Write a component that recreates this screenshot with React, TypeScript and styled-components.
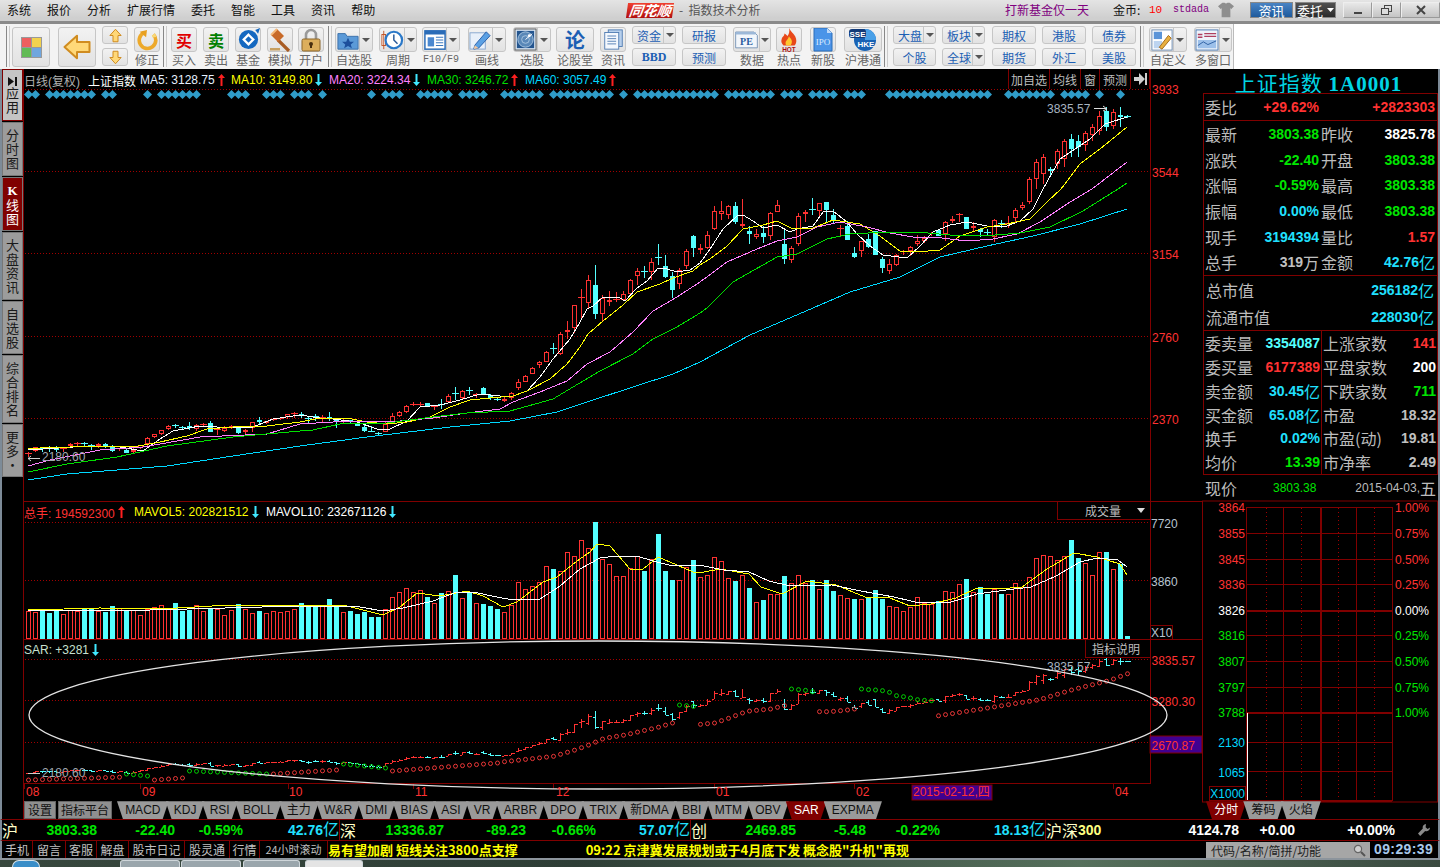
import React from "react";
import styled, { createGlobalStyle } from "styled-components";

const SANS = `"Liberation Sans", "Noto Sans CJK SC", sans-serif`;
const CJK = `"Noto Sans CJK SC", "Liberation Sans", sans-serif`;
const SERIF = `"Liberation Serif", "Noto Sans CJK SC", serif`;
const MONO = `"Liberation Mono", monospace`;
const RED = "#ff3232";
const CYAN = "#54ffff";
const DARK = "#800000";
const GREEN = "#00e600";

const Global = createGlobalStyle`
  html, body { margin: 0; padding: 0; background: #000; }
  * { box-sizing: border-box; }
`;

const Page = styled.div`
  width: 1440px; height: 867px; overflow: hidden; background: #000;
  font-family: ${SANS}; display: flex; flex-direction: column;
`;

/* ---------- title bar ---------- */
const TitleBar = styled.div`
  height: 24px; display: flex; align-items: flex-start; padding-top: 2px;
  background: linear-gradient(#e4e4e4, #cfcfcf 85%);
  border-bottom: 3px solid #8a8a8a;
  font-size: 12px; color: #111; line-height: 16px; white-space: nowrap;
`;
const Menu = styled.div`
  width: 627px; display: flex; gap: 16px; padding-left: 7px; font-family: ${CJK};
`;
const Logo = styled.div`
  width: 46px; height: 15px; margin-top: 1px; background: linear-gradient(#f04030, #b01010); color: #fff;
  font: italic bold 14px/15px ${CJK}; text-align: center; transform: skewX(-8deg);
`;
const SubTitle = styled.div`
  margin-left: 6px; color: #555; font-family: ${CJK};
`;
const TitleRight = styled.div`
  margin-left: auto; width: 435px; display: flex; align-items: flex-start;
`;
const TitleItem = styled.div<{ $w: number; $ml?: number; $c?: string; $f?: string; $s?: number }>`
  width: ${p => p.$w}px; margin-left: ${p => p.$ml ?? 0}px; color: ${p => p.$c || "#111"};
  font-family: ${p => p.$f || CJK}; font-size: ${p => p.$s ?? 12}px; white-space: nowrap;
`;
const NavBtn = styled.div<{ $bg: string; $w: number; $ml: number }>`
  margin-left: ${p => p.$ml}px; width: ${p => p.$w}px; height: 16px; display: flex; align-items: center; justify-content: center; gap: 4px; color: #fff;
  font: 13px/15px ${CJK}; background: ${p => p.$bg}; border: 1px solid #888;
`;
const WinBtn = styled.div<{ $w: number; $ml?: number }>`
  margin-left: ${p => p.$ml ?? 0}px; width: ${p => p.$w}px; height: 16px; display: flex; align-items: center; justify-content: center;
  background: linear-gradient(#e8e8e8, #c4c4c4); border: 1px solid #9a9a9a; border-top-color: #eee; border-left-color: #eee;
`;

/* ---------- toolbar ---------- */
const Toolbar = styled.div`
  height: 46px; display: flex; align-items: flex-start; background: #f3f3f3; padding-top: 3px;
`;
const ToolEnd = styled.div`
  flex: 1; align-self: stretch; margin: -3px 0 0 1px; background: #fff; border-left: 1px solid #bbb;
`;
const Sep = styled.div<{ $ml: number }>`
  margin-left: ${p => p.$ml}px; width: 4px; height: 41px; margin-top: -1px;
  border-left: 1px solid #888; border-right: 1px solid #ccc;
`;
const boxStyle = `
  background: linear-gradient(#f2f2f2, #e2e2e2);
  border: 1px solid #c6c6c6; border-radius: 3px;
`;
const BigBtn = styled.div<{ $ml: number }>`
  ${boxStyle}
  margin-left: ${p => p.$ml}px; width: 38px; height: 40px; display: flex; align-items: center; justify-content: center;
`;
const Stack = styled.div<{ $ml: number; $w: number }>`
  margin-left: ${p => p.$ml}px; width: ${p => p.$w}px; display: flex; flex-direction: column; gap: 4px; margin-top: -1px;
`;
const ArrowBtn = styled.div`
  ${boxStyle}
  height: 18px; display: flex; align-items: center; justify-content: center;
`;
const TextBtn = styled.div<{ $bold?: boolean }>`
  ${boxStyle}
  height: 18px; display: flex; align-items: center; justify-content: center; position: relative;
  color: #1c5fb4; white-space: nowrap;
  font: ${p => (p.$bold ? `bold 12px ${SERIF}` : `12px ${CJK}`)};
`;
const TextSplit = styled(TextBtn)`
  justify-content: flex-start; padding-left: 4px;
`;
const MiniDrop = styled.div`
  position: absolute; right: 0; top: 0; bottom: 0; width: 12px; border-left: 1px solid #c6c6c6;
  display: flex; align-items: center; justify-content: center;
`;
const Caret = styled.div`
  width: 0; height: 0; border-left: 4px solid transparent; border-right: 4px solid transparent; border-top: 4px solid #555;
`;
const ToolCol = styled.div<{ $ml: number; $w: number }>`
  margin-left: ${p => p.$ml}px; width: ${p => p.$w}px; display: flex; flex-direction: column; align-items: center;
`;
const IconBox = styled.div`
  ${boxStyle}
  width: 100%; height: 25px; display: flex; align-items: center; justify-content: center;
`;
const IconMain = styled.div`
  flex: 1; display: flex; align-items: center; justify-content: center; height: 100%;
`;
const IconDrop = styled.div`
  width: 13px; height: 100%; border-left: 1px solid #c6c6c6; display: flex; align-items: center; justify-content: center;
`;
const ToolLabel = styled.div<{ $mono?: boolean }>`
  height: 16px; color: #666; white-space: nowrap;
  font: ${p => (p.$mono ? `10px/16px ${MONO}` : `12px/16px ${CJK}`)};
`;
const BigChar = styled.div<{ $c: string; $s: number }>`
  color: ${p => p.$c}; font: bold ${p => p.$s}px/1 ${CJK};
`;

/* ---------- main area ---------- */
const Body = styled.div`
  height: 750px; display: flex; border-left: 2px solid #7d8b98; border-right: 2px solid #7d8b98;
`;
const LeftTabs = styled.div`
  width: 22px; border-right: 1px solid ${DARK}; display: flex; flex-direction: column; gap: 1px;
`;
const SideTab = styled.div<{ $h: number; $kind?: "active" | "light" }>`
  height: ${p => p.$h}px; width: 21px; display: flex; flex-direction: column; align-items: center; justify-content: center;
  text-align: center; font: 13px/14px ${CJK}; word-break: break-all;
  padding: 0 3px;
  background: ${p => (p.$kind === "active" ? DARK : p.$kind === "light" ? "#c4c4c4" : "#9c9c9c")};
  color: ${p => (p.$kind === "active" ? "#fff" : "#1a1a1a")};
  border: 1px solid ${p => (p.$kind === "light" ? DARK : "#777")};
`;
const SideK = styled.b`
  font: bold 13px/14px ${SERIF};
`;
const ChartCol = styled.div`
  width: 1178px; display: flex; flex-direction: column;
`;
const Panel = styled.div<{ $h: number }>`
  position: relative; height: ${p => p.$h}px; overflow: visible;
`;
const ChartSvg = styled.svg`
  display: block; overflow: visible; position: absolute; left: 0; top: 0;
  text { font: 12px ${SANS}; }
`;
const HeaderRow = styled.div<{ $top?: number }>`
  position: absolute; left: 0; top: ${p => p.$top ?? 0}px; height: 20px; display: flex; align-items: center; white-space: nowrap;
  font-size: 12px;
`;
const HeadText = styled.span<{ $c: string; $w?: number }>`
  color: ${p => p.$c}; display: inline-flex; align-items: center; gap: 3px;
  ${p => (p.$w ? `width: ${p.$w}px;` : "")}
`;
const TopActions = styled.div`
  position: absolute; right: 52px; top: 0; height: 20px; display: flex; border-left: 1px solid ${DARK};
`;
const TopAction = styled.div<{ $w: number }>`
  width: ${p => p.$w}px; border-right: 1px solid ${DARK}; color: #bdbdbd; font: 12px/19px ${CJK};
  text-align: center; display: flex; align-items: center; justify-content: center;
`;
const IndicatorBox = styled.div<{ $w: number; $pr: number; $gap?: number }>`
  position: absolute; right: 52px; top: 0; width: ${p => p.$w}px; height: 18px; border: 1px solid ${DARK}; border-top: none; border-right: none;
  color: #bdbdbd; font: 12px/17px ${CJK}; background: #000;
  display: flex; align-items: center; justify-content: flex-end; gap: ${p => p.$gap ?? 0}px; padding-right: ${p => p.$pr}px;
`;
const TabBar = styled.div`
  height: 18px; display: flex; align-items: flex-start; white-space: nowrap;
`;
const PlainTab = styled.div<{ $w: number; $ml: number }>`
  margin-left: ${p => p.$ml}px; width: ${p => p.$w}px; height: 18px; background: #8f8f8f; border: 1px solid #666;
  color: #111; font: 12px/16px ${CJK}; text-align: center;
`;
const Trap = styled.div<{ $active?: boolean }>`
  height: 18px; margin-left: -3px; padding: 0 8.14px;
  clip-path: polygon(0 0, 100% 0, calc(100% - 6px) 100%, 6px 100%);
  background: ${p => (p.$active ? DARK : "#9a9a9a")};
  color: ${p => (p.$active ? "#fff" : "#111")};
  font: 12px/18px ${SANS};
`;
const TabStart = styled.div`
  width: 8px;
`;

/* ---------- right panel ---------- */
const RightPanel = styled.div`
  width: 236px; display: flex; flex-direction: column;
`;
const RightTitle = styled.div`
  height: 24px; text-align: center; color: #00d4e4; font: 21px/26px ${CJK}; white-space: nowrap;
  letter-spacing: 1px; padding-right: 3px;
`;
const TitleCode = styled.b`
  font: bold 21px/26px ${SERIF};
`;
const Box = styled.div`
  margin-left: 1px; width: 235px; border: 1px solid ${DARK}; border-bottom: none;
`;
const Section = styled.div<{ $h: number }>`
  height: ${p => p.$h}px; display: flex; flex-direction: column;
  border-bottom: 1px solid ${DARK};
`;
const Row = styled.div`
  flex: 1; display: flex; align-items: center;
`;
const Half = styled.div<{ $w: number; $pad?: number; $line?: boolean }>`
  width: ${p => p.$w}px; height: 100%; display: flex; align-items: center; justify-content: space-between;
  padding: 0 ${p => p.$pad ?? 1}px;
  ${p => (p.$line ? `border-left: 1px solid ${DARK};` : "")}
`;
const Label = styled.span`
  color: #bcbcbc; font: 16px/1 ${CJK}; white-space: nowrap;
`;
const Val = styled.span<{ $c: string }>`
  color: ${p => p.$c}; font: bold 14px/1 ${SANS}; white-space: nowrap; display: inline-flex; align-items: center;
`;
const Unit = styled.span<{ $s?: number }>`
  font: ${p => p.$s ?? 16}px/1 ${CJK};
`;
const PriceRow = styled.div`
  height: 26px; display: flex; align-items: center; padding: 0 2px; margin-left: 1px; white-space: nowrap;
`;
const PriceVal = styled.span`
  color: ${GREEN}; font-size: 12px; margin-left: 36px;
`;
const PriceDate = styled.span`
  color: #bcbcbc; font-size: 12px; margin-left: auto; display: inline-flex; align-items: center;
`;
const RightTabs = styled.div`
  height: 18px; display: flex; padding-left: 7px;
`;

/* ---------- status ---------- */
const StatusRow = styled.div`
  height: 21px; display: flex; align-items: center; border-top: 1px solid ${DARK}; border-left: 2px solid #7d8b98; border-right: 2px solid #7d8b98;
  white-space: nowrap;
`;
const Name = styled.span<{ $w: number; $c?: string }>`
  width: ${p => p.$w}px; color: ${p => p.$c || "#ffffc8"}; font: 16px/1 ${CJK}; flex: none; display: inline-flex; align-items: center;
`;
const Num = styled.b`
  font: bold 14px/1 ${SANS}; color: #ffff80;
`;
const Cell = styled.span<{ $w: number; $c: string; $line?: boolean }>`
  width: ${p => p.$w}px; flex: none; text-align: right; color: ${p => p.$c}; font: bold 14px/20px ${SANS};
  ${p => (p.$line ? `border-right: 1px solid ${DARK};` : "")}
`;
const WrenchWrap = styled.span`
  margin-left: 22px; display: inline-flex;
`;
const LinkRow = styled.div`
  height: 18px; display: flex; align-items: stretch; border-top: 1px solid ${DARK};
  border-left: 2px solid #7d8b98; border-right: 2px solid #7d8b98; white-space: nowrap;
`;
const LinkItem = styled.div<{ $w: number; $small?: boolean }>`
  width: ${p => p.$w}px; flex: none; border-right: 1px solid ${DARK}; color: #c0c0c0; text-align: center;
  font: ${p => (p.$small ? 11 : 12)}px/17px ${CJK};
`;
const Ticker = styled.div`
  flex: none; width: 878px; overflow: hidden; color: #ffff00; font: bold 13px/17px ${CJK}; display: flex;
`;
const TickerB = styled.span`
  margin-left: 68px;
`;
const SearchBox = styled.div`
  width: 164px; flex: none; background: #a6a6a6; color: #222; font: 12px/17px ${CJK}; padding-left: 5px;
  display: flex; align-items: center; justify-content: space-between; padding-right: 4px; margin-top: 1px;
`;
const Clock = styled.div`
  margin-left: 4px; color: #a8c8ea; font: bold 14px/17px ${SANS}; letter-spacing: 0.4px;
`;
const Frame = styled.div`
  height: 2px; background: #8c949c;
`;
const Taskbar = styled.div`
  height: 7px; display: flex; background: linear-gradient(90deg, #38483e, #2e3e36 40%, #56705c 75%, #3a4a40);
  overflow: hidden;
`;
const TaskTab = styled.div<{ $w: number; $ml: number; $bright?: boolean }>`
  margin-left: ${p => p.$ml}px; width: ${p => p.$w}px; height: 7px; border-radius: 3px 3px 0 0;
  background: ${p => (p.$bright ? "#e4e4e4" : "#9aa6ac")}; border: 1px solid #cfd6da; border-bottom: none;
`;
const TaskOrb = styled.div`
  margin-left: 12px; width: 28px; height: 7px; border-radius: 14px 14px 0 0; background: #3a8ec8; border: 1px solid #d8e4ec; border-bottom: none;
`;
const MiniWrap = styled.div`
  position: relative; flex: 1;
`;

/* ---------- icons ---------- */
const Arr: React.FC<{ up?: boolean; c: string }> = ({ up, c }) => (
  <svg width="7" height="12" viewBox="0 0 7 12">
    {up ? <path d="M3.5 0 L7 4 H4.5 V12 H2.5 V4 H0 Z" fill={c} /> : <path d="M3.5 12 L7 8 H4.5 V0 H2.5 V8 H0 Z" fill={c} />}
  </svg>
);
const Squares = () => (
  <svg width="21" height="21" viewBox="0 0 21 21">
    <rect x="0.5" y="0.5" width="10" height="10" fill="#ee5f5f" stroke="#999" />
    <rect x="10.5" y="0.5" width="10" height="10" fill="#f2d24e" stroke="#999" />
    <rect x="0.5" y="10.5" width="10" height="10" fill="#62bb56" stroke="#999" />
    <rect x="10.5" y="10.5" width="10" height="10" fill="#6fa6de" stroke="#999" />
  </svg>
);
const ArrowIcon: React.FC<{ dir: "left" | "up" | "down"; s: number }> = ({ dir, s }) => {
  const rot = dir === "left" ? 0 : dir === "up" ? 90 : -90;
  return (
    <svg width={s} height={s} viewBox="0 0 24 24">
      <path transform={`rotate(${rot} 12 12)`} d="M2 12 L12 3 V8 H22 V16 H12 V21 Z" fill="#ffd878" stroke="#d08c20" strokeWidth="1.6" strokeLinejoin="round" />
    </svg>
  );
};
const Refresh = () => (
  <svg width="22" height="22" viewBox="0 0 24 24">
    <path d="M9 4 A9 9 0 1 0 19 6" fill="none" stroke="#eda92a" strokeWidth="4" />
    <path d="M19 6 A9 9 0 0 1 20 9" fill="none" stroke="#f8d878" strokeWidth="4" />
    <path d="M4 3 L12 1 L11 9 Z" fill="#e8a020" />
  </svg>
);
const Fund = () => (
  <svg width="23" height="23" viewBox="0 0 24 24">
    <circle cx="12" cy="12" r="10" fill="#1468c0" />
    <path d="M19 2 L24 0 L22 6 Z" fill="#1468c0" />
    <path d="M12 7 L17 12 L12 17 L7 12 Z" fill="none" stroke="#fff" strokeWidth="2.4" />
  </svg>
);
const Gavel = () => (
  <svg width="24" height="24" viewBox="0 0 24 24">
    <path d="M10 12 L21 23" stroke="#a85c24" strokeWidth="3.2" />
    <path d="M3 7 L9 1 L16 8 L10 14 Z" fill="#c86a28" />
    <path d="M3 7 L9 1" stroke="#f4b878" strokeWidth="2" />
    <rect x="2" y="20" width="10" height="2.5" fill="#c8a060" />
  </svg>
);
const Lock = () => (
  <svg width="24" height="24" viewBox="0 0 24 24">
    <path d="M7 11 V7 A5 5 0 0 1 17 7 V11" fill="none" stroke="#9a9a9a" strokeWidth="2.6" />
    <rect x="3" y="11" width="18" height="12" rx="1.5" fill="#dcae5c" stroke="#8a6428" />
    <circle cx="12" cy="16" r="2" fill="#4a3010" />
    <rect x="11" y="16" width="2" height="4" fill="#4a3010" />
  </svg>
);
const Folder = () => (
  <svg width="22" height="22" viewBox="0 0 24 24">
    <path d="M1 5 H9 L11 8 H23 V22 H1 Z" fill="#5b9ad8" stroke="#3a6ea8" />
    <path d="M12 9.5 L14 14 H18.5 L15 17 L16.2 21 L12 18.6 L7.8 21 L9 17 L5.5 14 H10 Z" fill="#1c4f9c" />
  </svg>
);
const ClockIcon = () => (
  <svg width="24" height="22" viewBox="0 0 24 24">
    <rect x="1" y="6" width="4" height="12" fill="#fff" stroke="#c05020" />
    <path d="M3 2 V22" stroke="#c05020" />
    <circle cx="14" cy="12" r="9" fill="#fff" stroke="#2a78c8" strokeWidth="2.4" />
    <path d="M14 6 V12 L18 16" stroke="#2a5a98" strokeWidth="1.6" fill="none" />
  </svg>
);
const DocBlue = () => (
  <svg width="22" height="22" viewBox="0 0 24 24">
    <rect x="1" y="2" width="22" height="20" fill="#fff" stroke="#2a6cb8" strokeWidth="1.6" />
    <rect x="1" y="2" width="22" height="4" fill="#2a6cb8" />
    <path d="M4 9 H11 V19 H4 Z" fill="#4a88d0" />
    <path d="M13 9 H21 M13 12 H21 M13 15 H21 M13 18 H21" stroke="#2a6cb8" />
  </svg>
);
const PencilIcon = () => (
  <svg width="23" height="23" viewBox="0 0 24 24">
    <rect x="1" y="5" width="16" height="17" fill="#e8f0fa" stroke="#88a8d0" />
    <path d="M6 18 L18 4 L22 8 L10 21 L5 22 Z" fill="#5aa0e4" stroke="#2a60a8" />
    <path d="M5 22 L6 18 L10 21 Z" fill="#f4c8a0" />
  </svg>
);
const Radar = () => (
  <svg width="23" height="23" viewBox="0 0 24 24">
    <rect x="1" y="1" width="22" height="22" fill="#d8e4f0" stroke="#555" />
    <rect x="3" y="3" width="18" height="18" fill="#23558f" />
    <circle cx="12" cy="12" r="8" fill="#5a88b8" stroke="#a8c4e0" />
    <circle cx="12" cy="12" r="4" fill="none" stroke="#a8c4e0" />
    <path d="M12 12 L19 6" stroke="#fff" />
    <circle cx="16" cy="8" r="1.5" fill="#fff" />
  </svg>
);
const Pages = () => (
  <svg width="21" height="23" viewBox="0 0 24 24">
    <rect x="6" y="1" width="16" height="19" fill="#b8d0ec" stroke="#4a78b0" />
    <rect x="2" y="4" width="16" height="19" fill="#f4f8fd" stroke="#4a78b0" />
    <path d="M5 8 H15 M5 11 H15 M5 14 H15 M5 17 H15" stroke="#4a78b0" />
  </svg>
);
const PeDoc = () => (
  <svg width="25" height="23" viewBox="0 0 30 24">
    <path d="M2 3 H24 L28 7 V22 H2 Z" fill="#f2f6fb" stroke="#6a8ab0" />
    <rect x="2" y="3" width="24" height="3" fill="#9cb8d8" />
    <text x="15" y="18" textAnchor="middle" fontFamily={SERIF} fontWeight="bold" fontSize="12" fill="#2a5ca0">PE</text>
  </svg>
);
const Flame = () => (
  <svg width="22" height="24" viewBox="0 0 24 26">
    <path d="M12 0 C14 5 20 7 20 14 C20 16 19 18 18 19 H6 C4 17 3 15 4 12 C5 9 7 9 7 6 C9 7 10 8 10 9 C12 7 13 4 12 0 Z" fill="#e84818" />
    <path d="M12 9 C13 11 16 13 15 16 C15 17 14 18 14 19 H9 C8 17 8 15 9 14 C10 13 11 12 12 9 Z" fill="#ffc830" />
    <text x="12" y="26" textAnchor="middle" fontFamily={SANS} fontWeight="bold" fontSize="7" fill="#b01010">HOT</text>
  </svg>
);
const IpoDoc = () => (
  <svg width="20" height="24" viewBox="0 0 20 24">
    <path d="M1 0 H14 L19 5 V23 H1 Z" fill="#4a94e8" stroke="#2a6cb8" />
    <path d="M14 0 V5 H19 Z" fill="#bcd8f8" />
    <text x="10" y="17" textAnchor="middle" fontFamily={SERIF} fontSize="9" fill="#dcecff">IPO</text>
  </svg>
);
const SseHke = () => (
  <svg width="32" height="25" viewBox="0 0 32 25">
    <circle cx="18" cy="13" r="11" fill="#1862b4" />
    <path d="M18 2 A11 11 0 0 1 29 13 H18 Z" fill="#48a0e8" />
    <rect x="2" y="2" width="17" height="9" rx="3" fill="#123a78" />
    <text x="10.5" y="9.6" textAnchor="middle" fontFamily={SANS} fontWeight="bold" fontSize="8" fill="#fff">SSE</text>
    <text x="19" y="20" textAnchor="middle" fontFamily={SANS} fontWeight="bold" fontSize="8" fill="#fff">HKE</text>
  </svg>
);
const CustomIcon = () => (
  <svg width="22" height="22" viewBox="0 0 24 24">
    <rect x="1" y="1" width="22" height="22" fill="#fff" stroke="#6a8ab0" />
    <rect x="3" y="3" width="9" height="8" fill="#5a94d8" />
    <rect x="3" y="13" width="9" height="8" fill="#bcd4f0" />
    <path d="M9 20 L19 7 L22 10 L12 22 Z" fill="#e8b040" stroke="#a06818" />
  </svg>
);
const WindowsIcon = () => (
  <svg width="24" height="22" viewBox="0 0 26 24">
    <rect x="1" y="1" width="24" height="22" fill="#eef3fa" stroke="#4a78b0" />
    <path d="M3 6 H8 M3 9 H8 M10 5 H23 M10 8 H23" stroke="#b04060" strokeWidth="1.4" />
    <rect x="3" y="12" width="20" height="9" fill="#9cc0ea" />
    <path d="M3 18 L9 14 L14 17 L23 13" stroke="#2a5ca0" fill="none" />
  </svg>
);
const Shirt = () => (
  <svg width="20" height="16" viewBox="0 0 24 22">
    <path d="M7 1 L10 1 Q12 3 14 1 L17 1 L23 6 L19 10 L18 8 V21 H6 V8 L5 10 L1 6 Z" fill="#8e8e8e" />
  </svg>
);
const MagIcon = () => (
  <svg width="13" height="13" viewBox="0 0 13 13">
    <circle cx="5" cy="5" r="3.6" fill="#cfcfcf" stroke="#666" strokeWidth="1.2" />
    <path d="M8 8 L12 12" stroke="#555" strokeWidth="2" />
  </svg>
);
const WrenchIcon = () => (
  <svg width="14" height="14" viewBox="0 0 14 14">
    <path d="M9 1 A3.5 3.5 0 0 0 5.8 5.6 L1 10.6 L3.2 13 L8.2 8 A3.5 3.5 0 0 0 13 4.6 L10.6 6 L8.6 4.2 Z" fill="#8a8a8a" />
  </svg>
);
const PlayBar = () => (
  <svg width="11" height="9" viewBox="0 0 11 9">
    <path d="M1 0 L7 4.5 L1 9 Z" fill="#111" />
    <rect x="8" y="0" width="2" height="9" fill="#111" />
  </svg>
);

/* ---------- chart data ---------- */
type C = [number, number, number, number, number];
const LC: C[] = ([
  [1150, 1152, 1156, 1165, 0], [1134, 1135, 1146, 1150, 0], [1134, 1137, 1138, 1150, 1], [1132, 1136, 1138, 1150, 1],
  [1132, 1138, 1142, 1148, 1], [1134, 1136, 1140, 1150, 0], [1122, 1125, 1130, 1132, 0], [1120, 1122, 1124, 1134, 0],
  [1118, 1122, 1124, 1130, 1], [1124, 1127, 1130, 1142, 1], [1122, 1125, 1130, 1136, 0], [1122, 1126, 1130, 1136, 1],
  [1128, 1132, 1146, 1150, 1], [1136, 1138, 1140, 1145, 0], [1138, 1142, 1152, 1152, 1], [1130, 1142, 1150, 1156, 0],
  [1128, 1129, 1136, 1140, 0], [1105, 1108, 1126, 1130, 0], [1094, 1095, 1105, 1108, 0], [1082, 1084, 1094, 1098, 0],
  [1068, 1070, 1080, 1084, 0], [1064, 1068, 1070, 1076, 1], [1070, 1075, 1078, 1084, 1], [1060, 1072, 1078, 1084, 1],
  [1064, 1067, 1080, 1086, 0], [1062, 1064, 1068, 1074, 0], [1056, 1062, 1088, 1088, 1], [1078, 1080, 1082, 1098, 0],
  [1072, 1078, 1085, 1090, 0], [1068, 1070, 1076, 1080, 0], [1072, 1073, 1092, 1095, 1], [1080, 1082, 1090, 1098, 0],
  [1060, 1060, 1076, 1088, 0], [1045, 1052, 1058, 1064, 1], [1055, 1056, 1062, 1064, 0], [1050, 1050, 1053, 1056, 0],
  [1046, 1048, 1050, 1054, 0], [1034, 1036, 1045, 1050, 0], [1030, 1032, 1036, 1048, 0],
] as C[]).map(c => [70 + c[0] / 3, 70 + c[1] / 3, 70 + c[2] / 3, 70 + c[3] / 3, c[4]] as C);
const AC: C[] = ([
  [520, 525, 532, 538, 1], [530, 538, 541, 556, 1], [525, 530, 534, 546, 1], [528, 533, 537, 548, 0], [520, 535, 540, 545, 1],
  [540, 543, 550, 568, 1], [540, 545, 549, 552, 0], [542, 544, 550, 553, 1], [552, 553, 560, 562, 1], [557, 563, 576, 580, 1],
  [560, 576, 578, 580, 1], [580, 583, 584, 590, 1], [550, 555, 578, 578, 0], [522, 532, 548, 552, 0], [516, 520, 530, 534, 0],
  [498, 502, 518, 522, 0], [490, 494, 497, 502, 0], [490, 495, 497, 502, 0], [492, 493, 501, 503, 1], [498, 500, 502, 514, 0],
  [480, 496, 498, 510, 1], [466, 470, 488, 490, 0], [445, 462, 465, 482, 1], [454, 455, 478, 480, 0], [444, 452, 457, 468, 1],
  [462, 466, 467, 476, 0], [444, 448, 464, 468, 1], [464, 468, 478, 484, 1], [476, 480, 482, 486, 1], [475, 480, 486, 490, 0],
  [460, 461, 478, 482, 0], [420, 430, 446, 452, 0], [408, 410, 428, 430, 0], [385, 386, 404, 405, 0], [366, 370, 379, 386, 0],
  [335, 338, 368, 370, 0], [313, 328, 331, 345, 1], [278, 286, 344, 348, 0], [246, 274, 280, 300, 0], [198, 199, 268, 282, 0],
  [150, 175, 178, 238, 0], [108, 124, 192, 208, 0], [78, 138, 224, 240, 1], [168, 176, 224, 250, 0], [157, 184, 188, 202, 0],
  [160, 180, 182, 190, 0], [156, 166, 182, 186, 0], [120, 122, 164, 170, 0], [86, 97, 112, 138, 0], [82, 96, 98, 118, 1],
  [58, 68, 100, 122, 0], [15, 53, 56, 78, 1], [48, 82, 114, 118, 1], [100, 112, 152, 176, 1], [86, 92, 136, 150, 0],
  [30, 36, 82, 90, 0], [-12, -8, 28, 54, 1],
] as C[]).map(c => [240 + c[0] / 3, 240 + c[1] / 3, 240 + c[2] / 3, 240 + c[3] / 3, c[4]] as C);
const BC: C[] = ([
  [165, 178, 182, 195, 0], [125, 138, 178, 180, 0], [52, 65, 120, 122, 0], [36, 65, 76, 92, 0], [48, 50, 78, 90, 0],
  [40, 52, 98, 105, 1], [30, 105, 110, 118, 0], [112, 125, 136, 165, 1], [120, 135, 145, 150, 0], [112, 132, 145, 162, 1],
  [68, 72, 142, 152, 0], [33, 48, 68, 70, 0], [122, 165, 210, 225, 1], [170, 178, 214, 222, 0], [72, 82, 164, 170, 0],
  [62, 70, 76, 100, 0], [27, 60, 63, 78, 1], [42, 42, 66, 80, 0], [40, 40, 64, 100, 1], [60, 78, 94, 105, 1],
  [108, 118, 121, 140, 0], [95, 110, 152, 153, 1], [175, 192, 204, 208, 1], [155, 157, 186, 205, 0], [135, 150, 174, 178, 1],
  [125, 125, 198, 198, 1], [205, 210, 236, 252, 1], [210, 226, 245, 255, 0], [195, 197, 228, 232, 0], [182, 186, 188, 198, 0],
  [172, 175, 186, 200, 0], [138, 155, 166, 170, 0], [142, 148, 155, 162, 0], [128, 132, 136, 142, 0], [124, 124, 140, 142, 1],
  [96, 98, 136, 155, 0], [82, 90, 95, 102, 0], [72, 74, 75, 98, 0], [84, 85, 120, 120, 1], [100, 110, 118, 128, 0],
  [118, 120, 128, 144, 1], [120, 130, 132, 140, 1], [90, 94, 144, 160, 0], [92, 102, 105, 118, 1], [82, 103, 105, 118, 0],
  [58, 62, 86, 98, 0], [38, 48, 56, 62, 0], [-36, -30, 38, 46, 0],
] as C[]).map(c => [190 + c[0] / 3, 190 + c[1] / 3, 190 + c[2] / 3, 190 + c[3] / 3, c[4]] as C);
const EC: C[] = [
  [160, 163, 180, 190, 0], [155, 158, 175, 185, 0], [168, 170, 172, 178, 1], [150, 152, 165, 170, 0], [140, 142, 160, 168, 0],
  [135, 140, 150, 158, 1], [136, 142, 148, 158, 1], [132, 134, 146, 152, 0], [125, 128, 136, 142, 0], [112, 117, 132, 136, 0],
  [108, 112, 128, 132, 1], [110, 113, 127, 130, 0], [108, 116, 118, 128, 1], [116, 117, 118, 119, 1],
];
const CANDLES: C[] = [...LC, ...AC, ...BC, ...EC];
const bx = (i: number) => 28 + 7 * i;

const MA: { c: string; pts: number[][] }[] = [
  {
    c: "#ffffff", pts: [[28, 451], [73, 448], [100, 447], [120, 448], [143, 452], [160, 440], [173, 432], [200, 427], [233, 429], [253, 428], [273, 420], [300, 416], [320, 419], [333, 420], [357, 423], [377, 430], [390, 430], [407, 422], [420, 408], [440, 406], [460, 401], [480, 395], [500, 397], [513, 397], [527, 392], [540, 378], [553, 360], [570, 340], [580, 323], [587, 310], [593, 307], [603, 298], [620, 299], [625, 302], [637, 289], [647, 282], [658, 269], [667, 270], [677, 273], [690, 271], [700, 264], [710, 250], [723, 230], [737, 217], [743, 216], [753, 222], [763, 229], [777, 226], [790, 233], [797, 230], [813, 227], [823, 213], [833, 212], [847, 223], [857, 235], [870, 247], [883, 256], [907, 259], [920, 247], [933, 233], [950, 226], [967, 223], [987, 227], [1007, 227], [1020, 222], [1033, 210], [1043, 190], [1060, 160], [1075, 150], [1090, 140], [1105, 125], [1127, 118]],
  },
  {
    c: "#ffff00", pts: [[28, 450], [40, 449], [100, 447], [133, 448], [160, 443], [187, 437], [207, 430], [233, 428], [267, 427], [300, 423], [320, 419], [347, 419], [367, 423], [387, 425], [407, 423], [430, 418], [450, 408], [470, 401], [490, 399], [513, 397], [527, 392], [550, 380], [567, 365], [580, 348], [588, 335], [603, 322], [623, 306], [637, 293], [660, 285], [673, 279], [693, 272], [700, 266], [710, 260], [727, 247], [743, 230], [763, 226], [777, 222], [793, 230], [813, 229], [833, 221], [860, 225], [880, 237], [900, 252], [917, 253], [940, 251], [960, 237], [987, 228], [1007, 225], [1030, 220], [1047, 203], [1061, 190], [1080, 165], [1100, 150], [1127, 128]],
  },
  {
    c: "#ff80ff", pts: [[28, 467], [50, 461], [100, 451], [143, 448], [200, 438], [267, 435], [300, 425], [333, 423], [400, 422], [433, 419], [467, 414], [500, 410], [513, 403], [540, 393], [567, 382], [587, 365], [610, 353], [633, 333], [653, 312], [677, 298], [700, 283], [727, 263], [757, 250], [777, 242], [797, 238], [817, 228], [840, 223], [867, 228], [890, 234], [913, 238], [933, 238], [967, 242], [993, 240], [1017, 235], [1040, 223], [1067, 205], [1092, 190], [1127, 163]],
  },
  {
    c: "#00e000", pts: [[28, 473], [67, 465], [117, 458], [167, 447], [233, 438], [300, 432], [313, 431], [340, 425], [387, 424], [433, 418], [467, 414], [510, 412], [553, 400], [573, 388], [600, 372], [633, 355], [653, 340], [677, 328], [700, 314], [707, 309], [733, 283], [777, 258], [797, 255], [827, 240], [850, 235], [887, 233], [917, 233], [950, 236], [983, 237], [1020, 234], [1050, 228], [1083, 212], [1118, 190], [1127, 184]],
  },
  {
    c: "#00d8ff", pts: [[28, 481], [67, 475], [167, 467], [233, 457], [300, 447], [367, 438], [400, 434], [450, 428], [510, 422], [557, 413], [587, 403], [633, 388], [673, 375], [700, 363], [750, 336], [813, 309], [850, 293], [900, 278], [940, 258], [987, 247], [1033, 237], [1080, 225], [1127, 210]],
  },
];

const VOL_LEFT = [612, 613, 610, 614, 612, 615, 611, 612, 609, 610, 612, 613, 607, 609, 612, 611, 616, 610, 608, 606, 610, 604, 612, 611, 606, 612, 609, 610, 616, 611, 605, 610, 614, 612, 614, 612, 613, 612, 610];
const VOL_A: [number, number][] = [[1092, 1], [1102, 1], [1104, 1], [1102, 0], [1080, 1], [1100, 1], [1120, 0], [1116, 1], [1125, 1], [1118, 1], [1134, 1], [1134, 1], [1110, 0], [1075, 0], [1060, 0], [1048, 0], [1060, 0], [1054, 0], [1075, 1], [1092, 0], [1062, 1], [1056, 0], [1008, 1], [1078, 0], [1060, 1], [1092, 0], [1095, 1], [1100, 1], [1110, 1]];
const VOL_B = [340, 318, 250, 270, 262, 250, 202, 210, 216, 160, 172, 124, 148, 69, 180, 196, 230, 232, 208, 170, 216, 180, 105, 216, 243, 244, 204, 183, 234, 228, 175, 186, 238, 246, 228, 267, 310, 303, 286, 285, 231, 252, 228, 252, 244, 270, 243, 276, 288, 297, 300, 300, 297, 273, 300, 322, 325, 337, 324, 294, 312, 316, 306, 276, 280, 255, 240, 279, 264, 284, 270, 285, 285, 253, 264, 235, 178, 169, 172, 183, 172, 123, 177, 192, 229, 160, 159, 211, 195, 411];
const VOL_BC = "0000000100 0001000000 1011100100 0001010100 1000101100 1011100000 0010001011 0100000000 0110001011".replace(/ /g, "");
const VOLS: { y: number; c: number }[] = [
  ...VOL_LEFT.map((y, i) => ({ y, c: LC[i][4] })),
  ...VOL_A.map(([v, c]) => ({ y: 240 + v / 3, c })),
  ...VOL_B.map((v, i) => ({ y: 500 + v / 3, c: +VOL_BC[i] })),
];
const VOL5 = [[28, 611], [100, 609], [160, 610], [230, 606], [300, 606], [347, 607], [367, 612], [383, 616], [400, 608], [417, 594], [440, 597], [467, 592], [483, 597], [503, 608], [517, 603], [543, 583], [557, 578], [577, 562], [590, 553], [597, 545], [610, 547], [630, 570], [643, 570], [658, 558], [677, 566], [693, 573], [699, 574], [720, 570], [749, 575], [761, 588], [782, 595], [807, 582], [836, 586], [865, 598], [890, 599], [910, 607], [931, 605], [956, 599], [977, 589], [998, 590], [1022, 588], [1047, 570], [1074, 554], [1097, 558], [1120, 565], [1127, 576]];
const VOL10 = [[28, 612], [150, 611], [300, 607], [333, 607], [360, 608], [383, 612], [403, 609], [433, 602], [457, 593], [473, 593], [497, 598], [513, 601], [540, 600], [560, 587], [580, 570], [600, 559], [617, 557], [637, 557], [653, 562], [673, 567], [699, 566], [724, 571], [749, 573], [769, 582], [790, 587], [832, 586], [861, 592], [894, 598], [915, 603], [948, 604], [977, 595], [1006, 591], [1031, 588], [1056, 577], [1080, 563], [1097, 559], [1118, 561], [1127, 568]];

const interp = (pts: number[][], x: number) => {
  for (let k = 1; k < pts.length; k++) {
    if (x <= pts[k][0]) {
      const [a, b] = pts[k - 1], [c, d] = pts[k];
      return b + ((d - b) * (x - a)) / (c - a);
    }
  }
  return pts[pts.length - 1][1];
};
type Dot = { i: number; y: number; c: string };
const runDots = (from: number, to: number, pts: number[][], c: string): Dot[] => {
  const out: Dot[] = [];
  for (let i = from; i <= to; i++) out.push({ i, y: interp(pts, bx(i)), c });
  return out;
};
const listDots = (from: number, ys: number[], c: string): Dot[] => ys.map((v, k) => ({ i: from + k, y: 650 + v / 3, c }));
const ZX = (X: number) => 500 + X / 2.412;
const Z = (a: number[][]) => a.map(([X, Y]) => [ZX(X), 650 + Y / 3]);
const SAR_RED = "#ff3c3c";
const SAR_GREEN = "#00e000";
const DOTS: Dot[] = [
  ...runDots(0, 13, [[28, 781], [125, 778]], SAR_RED),
  ...runDots(14, 17, [[126, 775], [147, 777]], SAR_GREEN),
  ...runDots(18, 22, [[154, 781], [182, 779]], SAR_RED),
  ...runDots(23, 34, [[189, 772], [266, 775]], SAR_GREEN),
  ...runDots(35, 44, [[273, 775], [336, 771]], SAR_RED),
  ...runDots(45, 51, [[343, 765], [385, 769]], SAR_GREEN),
  ...runDots(52, 67, [[392, 772], [497, 764]], SAR_RED),
  ...runDots(68, 92, Z([[10, 338], [128, 322], [180, 303], [213, 288], [250, 268], [300, 258], [380, 235], [415, 222]]), SAR_RED),
  ...listDots(93, [168, 170, 172], SAR_GREEN),
  ...listDots(96, [226, 224, 222, 215, 208, 200, 192, 186, 184, 182, 180, 175, 170], SAR_RED),
  ...listDots(109, [120, 122, 124, 128], SAR_GREEN),
  ...listDots(113, [188, 188, 187, 185, 183, 180], SAR_RED),
  ...listDots(119, [120, 122, 123, 125, 130, 140, 143, 147, 152, 154, 155], SAR_GREEN),
  ...runDots(130, 157, Z([[1058, 200], [1180, 176], [1300, 152], [1380, 122], [1470, 94], [1513, 74]]), SAR_RED),
];
const sarY = (y: number) => 660 + (y - 110.5) * 0.332;

const DIAMONDS = (() => {
  const groups = [[0, 1], [3, 9], [11, 12], [17, 17], [19, 24], [29, 31], [34, 36], [38, 40], [42, 42], [49, 49], [51, 53], [56, 60], [62, 64], [65, 65], [68, 73], [75, 83], [85, 85], [87, 98], [100, 106], [108, 110], [112, 115], [117, 119], [123, 137], [140, 146], [148, 151], [153, 153], [156, 156]];
  const out: number[] = [];
  groups.forEach(([a, b]) => { for (let i = a; i <= b; i++) out.push(i); });
  return out;
})();

const pl = (pts: number[][]) => pts.map(p => `${p[0]},${p[1]}`).join(" ");
const Dotted: React.FC<{ y: number; x1?: number; x2?: number }> = ({ y, x1 = 25, x2 = 1150 }) => (
  <line x1={x1} x2={x2} y1={y + 0.5} y2={y + 0.5} stroke="#a00000" strokeDasharray="1 2" shapeRendering="crispEdges" />
);
const Line: React.FC<{ x1: number; y1: number; x2: number; y2: number; c?: string; w?: number }> = ({ x1, y1, x2, y2, c = DARK, w = 1 }) => (
  <line x1={x1} y1={y1} x2={x2} y2={y2} stroke={c} strokeWidth={w} shapeRendering="crispEdges" />
);

const MainChart = () => (
  <ChartSvg width="1178" height="433" viewBox="24 70 1178 433">
    {[90, 172, 254, 337, 419].map(y => <Dotted key={y} y={y} />)}
    <Line x1={1150.5} y1={70} x2={1150.5} y2={503} />
    <Line x1={24} y1={502.5} x2={1202} y2={502.5} />
    {DIAMONDS.map(i => <path key={i} d={`M${bx(i) + 0.5} 91 l4.5 4.5 l-4.5 4.5 l-4.5 -4.5 Z`} fill="#2f9cc8" />)}
    <g shapeRendering="crispEdges">
      {CANDLES.map((c, i) => {
        const x = bx(i);
        const col = c[4] ? CYAN : RED;
        const t = Math.round(c[1]), b = Math.round(c[2]);
        return (
          <g key={i}>
            <line x1={x + 0.5} x2={x + 0.5} y1={Math.round(c[0])} y2={Math.round(c[3])} stroke={col} />
            {b - t < 2
              ? <line x1={x - 3} x2={x + 4} y1={t + 0.5} y2={t + 0.5} stroke={col} />
              : c[4]
                ? <rect x={x - 2} y={t} width={5} height={b - t} fill={col} />
                : <rect x={x - 1.5} y={t + 0.5} width={4} height={b - t - 1} fill="#000" stroke={col} />}
          </g>
        );
      })}
      {MA.map(m => <polyline key={m.c} points={pl(m.pts)} fill="none" stroke={m.c} />)}
    </g>
    <text x="1047" y="114" fill="#a8b4c0">3835.57</text>
    <path d="M1094 109.5 H1106 M1103 107 L1107 110 L1103 112" stroke="#ddd" fill="none" />
    <path d="M28 459.5 H40 M31 457 L28 459.5 L31 462" stroke="#ccc" fill="none" />
    <text x="42" y="462" fill="#a0a8b0">2180.60</text>
    {[[3933, 95], [3544, 178], [3154, 260], [2760, 343], [2370, 425]].map(([v, y]) => (
      <text key={v} x="1152" y={y} fill={RED}>{v}</text>
    ))}
  </ChartSvg>
);

const VolChart = () => (
  <ChartSvg width="1178" height="138" viewBox="24 503 1178 138">
    <Dotted y={523} /><Dotted y={581} />
    <Line x1={1150.5} y1={503} x2={1150.5} y2={641} />
    <Line x1={24} y1={640.5} x2={1202} y2={640.5} />
    <g shapeRendering="crispEdges">
      {VOLS.map((v, i) => {
        const x = bx(i), y = Math.round(v.y);
        return v.c
          ? <rect key={i} x={x - 2} y={y} width={5} height={640 - y} fill={CYAN} />
          : <rect key={i} x={x - 1.5} y={y + 0.5} width={4} height={639 - y} fill="#000" stroke={RED} />;
      })}
      <polyline points={pl(VOL5)} fill="none" stroke="#ffff00" />
      <polyline points={pl(VOL10)} fill="none" stroke="#ffffff" />
    </g>
    <text x="1151" y="529" fill="#b8c4d0">7720</text>
    <text x="1151" y="587" fill="#b8c4d0">3860</text>
    <rect x="1150.5" y="626.5" width="22" height="14" fill="none" stroke={DARK} />
    <text x="1151" y="638" fill="#b8c4d0">X10</text>
  </ChartSvg>
);

const SarChart = () => (
  <ChartSvg width="1178" height="161" viewBox="24 641 1178 161">
    {[660, 701, 743].map(y => <Dotted key={y} y={y} />)}
    <Line x1={1150.5} y1={641} x2={1150.5} y2={785} />
    <Line x1={24} y1={784.5} x2={1150} y2={784.5} />
    {[24, 140, 288, 413, 553, 714, 854, 1113].map(x => <Line key={x} x1={x + 0.5} y1={785} x2={x + 0.5} y2={790} />)}
    <g shapeRendering="crispEdges">
      {CANDLES.map((c, i) => {
        const x = bx(i), col = c[4] ? CYAN : RED;
        const hi = Math.round(sarY(c[0])), lo = Math.round(sarY(c[3]));
        const op = Math.round(sarY(c[4] ? c[1] : c[2])), cl = Math.round(sarY(c[4] ? c[2] : c[1]));
        return (
          <g key={i} stroke={col}>
            <line x1={x + 0.5} x2={x + 0.5} y1={hi} y2={Math.max(lo, hi + 1)} />
            <line x1={x - 2} x2={x} y1={op + 0.5} y2={op + 0.5} />
            <line x1={x + 1} x2={x + 4} y1={cl + 0.5} y2={cl + 0.5} />
          </g>
        );
      })}
    </g>
    {DOTS.map(d => <circle key={d.i} cx={bx(d.i) + 0.5} cy={d.y} r={2} fill="none" stroke={d.c} strokeWidth={0.9} />)}
    <text x="1047" y="672" fill="#a8b4c0">3835.57</text>
    <path d="M28 774.5 H40" stroke="#ccc" fill="none" />
    <text x="42" y="778" fill="#a0a8b0">2180.60</text>
    <rect x="1150" y="737" width="52" height="17" fill="#400090" stroke={DARK} />
    <text x="1151.5" y="666" fill={RED}>3835.57</text>
    <text x="1151.5" y="707" fill={RED}>3280.30</text>
    <text x="1151.5" y="751" fill={RED}>2670.87</text>
    <ellipse cx="598" cy="716" rx="569" ry="74" fill="none" stroke="#e4e4e4" strokeWidth="1.3" />
    {[["08", 26], ["09", 142], ["10", 289], ["11", 415], ["12", 556], ["01", 716], ["02", 856], ["04", 1115]].map(([t, x]) => (
      <text key={t} x={x} y="797" fill={RED}>{t}</text>
    ))}
    <rect x="912" y="786" width="80" height="15" fill="#400090" stroke={DARK} />
    <text x="913" y="797" fill={RED}>2015-02-12,四</text>
  </ChartSvg>
);

const MINI_ROWS = [
  [507, "3864", "1.00%", RED], [533, "3855", "0.75%", RED], [559, "3845", "0.50%", RED], [584, "3836", "0.25%", RED],
  [610, "3826", "0.00%", "#fff"], [635, "3816", "0.25%", GREEN], [661, "3807", "0.50%", GREEN], [687, "3797", "0.75%", GREEN],
  [712, "3788", "1.00%", GREEN],
] as [number, string, string, string][];

const MiniChart = () => (
  <MiniWrap>
    <ChartSvg width="236" height="301" viewBox="1202 501 236 301">
      <rect x="1202.5" y="501" width="235" height="301" fill="none" stroke={DARK} />
      <rect x="1246.5" y="507.5" width="146" height="293" fill="none" stroke={DARK} />
      {[533, 559, 584, 635, 661, 687, 742, 771].map(y => <Line key={y} x1={1247} x2={1392} y1={y + 0.5} y2={y + 0.5} />)}
      {[610, 712, 800].map(y => <Line key={y} x1={1247} x2={1392} y1={y + 0.5} y2={y + 0.5} w={2} />)}
      {[1283, 1356].map(x => <Line key={x} x1={x + 0.5} x2={x + 0.5} y1={507} y2={800} />)}
      <Line x1={1320.5} x2={1320.5} y1={507} y2={800} w={2} />
      {[1266, 1301, 1338, 1374].map(x => (
        <line key={x} x1={x + 0.5} x2={x + 0.5} y1={508} y2={800} stroke="#a00000" strokeDasharray="1 3" shapeRendering="crispEdges" />
      ))}
      <Line x1={1247.5} x2={1247.5} y1={713} y2={800} c="#fff" />
      {MINI_ROWS.map(([y, l, r, c]) => (
        <g key={y + l}>
          <text x="1245" y={y + 5} textAnchor="end" fill={c}>{l}</text>
          <text x="1395" y={y + 5} fill={c}>{r}</text>
        </g>
      ))}
      <text x="1245" y="747" textAnchor="end" fill="#00d8ff">2130</text>
      <text x="1245" y="777" textAnchor="end" fill="#00d8ff">1065</text>
      <rect x="1209.5" y="786.5" width="36" height="14" fill="none" stroke={DARK} />
      <text x="1245" y="798" textAnchor="end" fill="#00d8ff">X1000</text>
    </ChartSvg>
  </MiniWrap>
);

const Split: React.FC<{ children: React.ReactNode }> = ({ children }) => (
  <IconBox>
    <IconMain>{children}</IconMain>
    <IconDrop><Caret /></IconDrop>
  </IconBox>
);

const TABS = ["MACD", "KDJ", "RSI", "BOLL", "主力", "W&R", "DMI", "BIAS", "ASI", "VR", "ARBR", "DPO", "TRIX", "新DMA", "BBI", "MTM", "OBV", "SAR", "EXPMA"];

export default function App() {
  return (
    <Page>
      <Global />
      <TitleBar>
        <Menu>
          {["系统", "报价", "分析", "扩展行情", "委托", "智能", "工具", "资讯", "帮助"].map(m => <span key={m}>{m}</span>)}
        </Menu>
        <Logo>同花顺</Logo>
        <SubTitle>- &nbsp;指数技术分析</SubTitle>
        <TitleRight>
          <TitleItem $w={84} $c="#800080">打新基金仅一天</TitleItem>
          <TitleItem $w={30} $ml={24}>金币:</TitleItem>
          <TitleItem $w={12} $ml={6} $c="#ff0000" $f={MONO} $s={11}>10</TitleItem>
          <TitleItem $w={36} $ml={12} $c="#800080" $f={MONO} $s={10}>stdada</TitleItem>
          <TitleItem $w={20} $ml={7}><Shirt /></TitleItem>
          <NavBtn $ml={14} $w={43} $bg="linear-gradient(#4a84c4,#1e5a9c)">资讯</NavBtn>
          <NavBtn $ml={2} $w={41} $bg="linear-gradient(#505050,#2a2a2a)">委托<svg width="7" height="4"><path d="M0 0 H7 L3.5 4 Z" fill="#fff" /></svg></NavBtn>
          <WinBtn $ml={7} $w={29}><svg width="10" height="10"><rect x="1" y="7" width="8" height="2" fill="#444" /></svg></WinBtn>
          <WinBtn $w={29}><svg width="12" height="10"><rect x="3.5" y="0.5" width="7" height="6" fill="none" stroke="#444" /><rect x="0.5" y="3.5" width="7" height="6" fill="#ddd" stroke="#444" /></svg></WinBtn>
          <WinBtn $w={39}><svg width="10" height="10"><path d="M1 1 L9 9 M9 1 L1 9" stroke="#444" strokeWidth="2" /></svg></WinBtn>
        </TitleRight>
      </TitleBar>

      <Toolbar>
        <Sep $ml={6} />
        <BigBtn $ml={2}><Squares /></BigBtn>
        <BigBtn $ml={8}><ArrowIcon dir="left" s={30} /></BigBtn>
        <Stack $ml={6} $w={26}>
          <ArrowBtn><ArrowIcon dir="up" s={15} /></ArrowBtn>
          <ArrowBtn><ArrowIcon dir="down" s={15} /></ArrowBtn>
        </Stack>
        <ToolCol $ml={6} $w={26}><IconBox><Refresh /></IconBox><ToolLabel>修正</ToolLabel></ToolCol>
        <Sep $ml={3} />
        <ToolCol $ml={4} $w={26}><IconBox><BigChar $c="#e00000" $s={16}>买</BigChar></IconBox><ToolLabel>买入</ToolLabel></ToolCol>
        <ToolCol $ml={6} $w={26}><IconBox><BigChar $c="#008000" $s={16}>卖</BigChar></IconBox><ToolLabel>卖出</ToolLabel></ToolCol>
        <ToolCol $ml={6} $w={26}><IconBox><Fund /></IconBox><ToolLabel>基金</ToolLabel></ToolCol>
        <ToolCol $ml={6} $w={26}><IconBox><Gavel /></IconBox><ToolLabel>模拟</ToolLabel></ToolCol>
        <ToolCol $ml={5} $w={26}><IconBox><Lock /></IconBox><ToolLabel>开户</ToolLabel></ToolCol>
        <Sep $ml={4} />
        <ToolCol $ml={3} $w={38}><Split><Folder /></Split><ToolLabel>自选股</ToolLabel></ToolCol>
        <ToolCol $ml={6} $w={38}><Split><ClockIcon /></Split><ToolLabel>周期</ToolLabel></ToolCol>
        <ToolCol $ml={5} $w={38}><Split><DocBlue /></Split><ToolLabel $mono>F10/F9</ToolLabel></ToolCol>
        <ToolCol $ml={8} $w={38}><Split><PencilIcon /></Split><ToolLabel>画线</ToolLabel></ToolCol>
        <ToolCol $ml={7} $w={38}><Split><Radar /></Split><ToolLabel>选股</ToolLabel></ToolCol>
        <ToolCol $ml={5} $w={38}><IconBox><BigChar $c="#1c5fb4" $s={20}>论</BigChar></IconBox><ToolLabel>论股堂</ToolLabel></ToolCol>
        <ToolCol $ml={6} $w={26}><IconBox><Pages /></IconBox><ToolLabel>资讯</ToolLabel></ToolCol>
        <Stack $ml={6} $w={44}>
          <TextSplit>资金<MiniDrop><Caret /></MiniDrop></TextSplit>
          <TextBtn $bold>BBD</TextBtn>
        </Stack>
        <Stack $ml={6} $w={44}><TextBtn>研报</TextBtn><TextBtn>预测</TextBtn></Stack>
        <ToolCol $ml={7} $w={38}><Split><PeDoc /></Split><ToolLabel>数据</ToolLabel></ToolCol>
        <ToolCol $ml={5} $w={26}><IconBox><Flame /></IconBox><ToolLabel>热点</ToolLabel></ToolCol>
        <ToolCol $ml={8} $w={26}><IconBox><IpoDoc /></IconBox><ToolLabel>新股</ToolLabel></ToolCol>
        <ToolCol $ml={8} $w={38}><IconBox><SseHke /></IconBox><ToolLabel>沪港通</ToolLabel></ToolCol>
        <Sep $ml={2} />
        <Stack $ml={5} $w={43}>
          <TextSplit>大盘<MiniDrop><Caret /></MiniDrop></TextSplit>
          <TextBtn>个股</TextBtn>
        </Stack>
        <Stack $ml={6} $w={43}>
          <TextSplit>板块<MiniDrop><Caret /></MiniDrop></TextSplit>
          <TextSplit>全球<MiniDrop><Caret /></MiniDrop></TextSplit>
        </Stack>
        <Stack $ml={7} $w={44}><TextBtn>期权</TextBtn><TextBtn>期货</TextBtn></Stack>
        <Stack $ml={6} $w={44}><TextBtn>港股</TextBtn><TextBtn>外汇</TextBtn></Stack>
        <Stack $ml={6} $w={44}><TextBtn>债券</TextBtn><TextBtn>美股</TextBtn></Stack>
        <Sep $ml={4} />
        <ToolCol $ml={5} $w={38}><Split><CustomIcon /></Split><ToolLabel>自定义</ToolLabel></ToolCol>
        <ToolCol $ml={7} $w={38}><Split><WindowsIcon /></Split><ToolLabel>多窗口</ToolLabel></ToolCol>
        <ToolEnd />
      </Toolbar>

      <Body>
        <LeftTabs>
          <SideTab $h={52} $kind="light"><PlayBar /><span>应用</span></SideTab>
          <SideTab $h={54}>分时图</SideTab>
          <SideTab $h={54} $kind="active"><span><SideK>K</SideK>线图</span></SideTab>
          <SideTab $h={68}>大盘资讯</SideTab>
          <SideTab $h={53}>自选股</SideTab>
          <SideTab $h={68}>综合排名</SideTab>
          <SideTab $h={53}><span>更多·</span></SideTab>
        </LeftTabs>

        <ChartCol>
          <Panel $h={433}>
            <MainChart />
            <HeaderRow $top={1}>
              <HeadText $c="#b0b0b0" $w={64}>日线(复权)</HeadText>
              <HeadText $c="#fff" $w={52}>上证指数</HeadText>
              <HeadText $c="#e4f0ff" $w={91}>MA5: 3128.75<Arr up c="#ff2020" /></HeadText>
              <HeadText $c="#ffff00" $w={98}>MA10: 3149.80<Arr c="#40e8ff" /></HeadText>
              <HeadText $c="#ff80ff" $w={98}>MA20: 3224.34<Arr c="#40e8ff" /></HeadText>
              <HeadText $c="#00e000" $w={98}>MA30: 3246.72<Arr up c="#ff2020" /></HeadText>
              <HeadText $c="#00d8ff">MA60: 3057.49<Arr up c="#ff2020" /></HeadText>
            </HeaderRow>
            <TopActions>
              <TopAction $w={41}>加自选</TopAction>
              <TopAction $w={31}>均线</TopAction>
              <TopAction $w={19}>窗</TopAction>
              <TopAction $w={31}>预测</TopAction>
              <TopAction $w={19}>
                <svg width="13" height="12" viewBox="0 0 13 12"><path d="M0 4 H5 V0 L11 6 L5 12 V8 H0 Z" fill="#d0d0d0" /><rect x="11" y="0" width="2" height="12" fill="#d0d0d0" /></svg>
              </TopAction>
            </TopActions>
          </Panel>

          <Panel $h={138}>
            <VolChart />
            <HeaderRow>
              <HeadText $c="#ff3232" $w={110}>总手: 194592300<Arr up c="#ff2020" /></HeadText>
              <HeadText $c="#ffff00" $w={132}>MAVOL5: 202821512<Arr c="#40e8ff" /></HeadText>
              <HeadText $c="#ffffff">MAVOL10: 232671126<Arr c="#40e8ff" /></HeadText>
            </HeaderRow>
            <IndicatorBox $w={93} $pr={5} $gap={16}>成交量<svg width="8" height="5"><path d="M0 0 H8 L4 5 Z" fill="#ddd" /></svg></IndicatorBox>
          </Panel>

          <Panel $h={161}>
            <SarChart />
            <HeaderRow>
              <HeadText $c="#c8e0d0">SAR: +3281<Arr c="#40e8ff" /></HeadText>
            </HeaderRow>
            <IndicatorBox $w={65} $pr={10}>指标说明</IndicatorBox>
          </Panel>

          <TabBar>
            <PlainTab $ml={0} $w={32}>设置</PlainTab>
            <PlainTab $ml={2} $w={54}>指标平台</PlainTab>
            <TabStart />
            {TABS.map(t => <Trap key={t} $active={t === "SAR"}>{t}</Trap>)}
          </TabBar>
        </ChartCol>

        <RightPanel>
          <RightTitle>上证指数 <TitleCode>1A0001</TitleCode></RightTitle>
          <Box>
            <Section $h={27}>
              <Row>
                <Half $w={116}><Label>委比</Label><Val $c={RED}>+29.62%</Val></Half>
                <Half $w={116}><span /><Val $c={RED}>+2823303</Val></Half>
              </Row>
            </Section>
            <Section $h={155}>
              {([
                ["最新", "3803.38", GREEN, "昨收", "3825.78", "#fff"],
                ["涨跌", "-22.40", GREEN, "开盘", "3803.38", GREEN],
                ["涨幅", "-0.59%", GREEN, "最高", "3803.38", GREEN],
                ["振幅", "0.00%", "#20e0ff", "最低", "3803.38", GREEN],
                ["现手", "3194394", "#20e0ff", "量比", "1.57", RED],
              ] as string[][]).map(r => (
                <Row key={r[0]}>
                  <Half $w={116}><Label>{r[0]}</Label><Val $c={r[2]}>{r[1]}</Val></Half>
                  <Half $w={116}><Label>{r[3]}</Label><Val $c={r[5]}>{r[4]}</Val></Half>
                </Row>
              ))}
              <Row>
                <Half $w={116}><Label>总手</Label><Val $c="#c0c0c0">319<Unit>万</Unit></Val></Half>
                <Half $w={116}><Label>金额</Label><Val $c="#20e0ff">42.76<Unit>亿</Unit></Val></Half>
              </Row>
            </Section>
            <Section $h={55}>
              <Row><Half $w={232} $pad={2}><Label>总市值</Label><Val $c="#20e0ff">256182<Unit>亿</Unit></Val></Half></Row>
              <Row><Half $w={232} $pad={2}><Label>流通市值</Label><Val $c="#20e0ff">228030<Unit>亿</Unit></Val></Half></Row>
            </Section>
            <Section $h={144}>
              {([
                ["委卖量", "3354087", CYAN, "", "上涨家数", "141", RED],
                ["委买量", "6177389", RED, "", "平盘家数", "200", "#fff"],
                ["卖金额", "30.45", "#20e0ff", "亿", "下跌家数", "711", GREEN],
                ["买金额", "65.08", "#20e0ff", "亿", "市盈", "18.32", "#c0c0c0"],
                ["换手", "0.02%", "#20e0ff", "", "市盈(动)", "19.81", "#c0c0c0"],
                ["均价", "13.39", GREEN, "", "市净率", "2.49", "#c0c0c0"],
              ] as string[][]).map(r => (
                <Row key={r[0]}>
                  <Half $w={117} $pad={1}><Label>{r[0]}</Label><Val $c={r[2]}>{r[1]}{r[3] && <Unit>{r[3]}</Unit>}</Val></Half>
                  <Half $w={116} $pad={1} $line><Label>{r[4]}</Label><Val $c={r[6]}>{r[5]}</Val></Half>
                </Row>
              ))}
            </Section>
          </Box>
          <PriceRow>
            <Label>现价</Label>
            <PriceVal>3803.38</PriceVal>
            <PriceDate>2015-04-03,<Unit>五</Unit></PriceDate>
          </PriceRow>
          <MiniChart />
          <RightTabs>
            <Trap $active>分时</Trap>
            <Trap>筹码</Trap>
            <Trap>火焰</Trap>
          </RightTabs>
        </RightPanel>
      </Body>

      <StatusRow>
        <Name $w={16}>沪</Name>
        <Cell $w={79} $c={GREEN}>3803.38</Cell>
        <Cell $w={78} $c={GREEN}>-22.40</Cell>
        <Cell $w={68} $c={GREEN}>-0.59%</Cell>
        <Cell $w={97} $c="#20e0ff" $line>42.76<Unit>亿</Unit></Cell>
        <Name $w={16}>深</Name>
        <Cell $w={88} $c={GREEN}>13336.87</Cell>
        <Cell $w={82} $c={GREEN}>-89.23</Cell>
        <Cell $w={70} $c={GREEN}>-0.66%</Cell>
        <Cell $w={95} $c="#20e0ff" $line>57.07<Unit>亿</Unit></Cell>
        <Name $w={16}>创</Name>
        <Cell $w={89} $c={GREEN}>2469.85</Cell>
        <Cell $w={70} $c={GREEN}>-5.48</Cell>
        <Cell $w={74} $c={GREEN}>-0.22%</Cell>
        <Cell $w={106} $c="#20e0ff" $line>18.13<Unit>亿</Unit></Cell>
        <Name $w={57}>沪深<Num>300</Num></Name>
        <Cell $w={136} $c="#fff">4124.78</Cell>
        <Cell $w={56} $c="#fff">+0.00</Cell>
        <Cell $w={100} $c="#fff">+0.00%</Cell>
        <WrenchWrap><WrenchIcon /></WrenchWrap>
      </StatusRow>
      <LinkRow>
        <LinkItem $w={31}>手机</LinkItem>
        <LinkItem $w={33}>留言</LinkItem>
        <LinkItem $w={31}>客服</LinkItem>
        <LinkItem $w={32}>解盘</LinkItem>
        <LinkItem $w={56}>股市日记</LinkItem>
        <LinkItem $w={45}>股灵通</LinkItem>
        <LinkItem $w={30}>行情</LinkItem>
        <LinkItem $w={68} $small>24小时滚动</LinkItem>
        <Ticker>
          <span>易有望加剧 短线关注3800点支撑</span>
          <TickerB>09:22 京津冀发展规划或于4月底下发 概念股"升机"再现</TickerB>
        </Ticker>
        <SearchBox>代码/名称/简拼/功能<MagIcon /></SearchBox>
        <Clock>09:29:39</Clock>
      </LinkRow>
      <Frame />
      <Taskbar>
        <TaskOrb />
        <TaskTab $ml={80} $w={60} />
        <TaskTab $ml={1} $w={60} />
        <TaskTab $ml={2} $w={57} />
        <TaskTab $ml={5} $w={58} $bright />
      </Taskbar>
    </Page>
  );
}
